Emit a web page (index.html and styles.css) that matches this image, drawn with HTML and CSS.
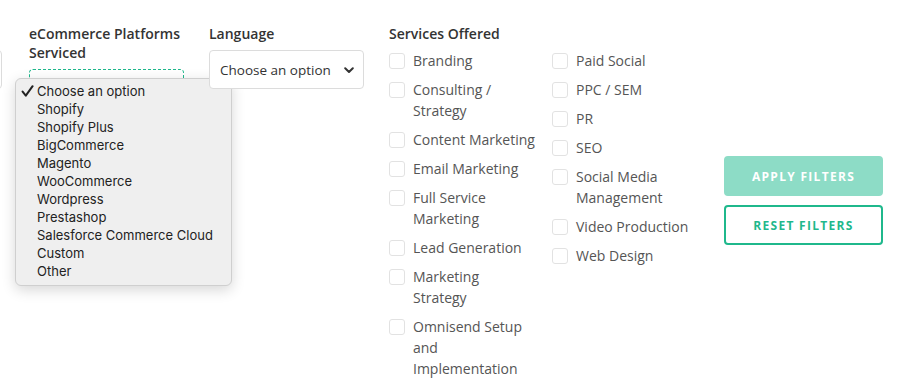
FILE: index.html
```html
<!DOCTYPE html>
<html lang="en">
<head>
<meta charset="utf-8">
<title>Filters</title>
<link rel="stylesheet" href="styles.css">
</head>
<body>
<div class="filters">
  <div class="field field-prev">
    <div class="label-spacer"></div>
    <div class="select"></div>
  </div>

  <div class="field field-platforms">
    <div class="label">eCommerce Platforms Serviced</div>
    <div class="select select-focus"></div>
    <ul class="menu">
      <li class="menu-item checked"><svg class="tick" width="13" height="12" viewBox="0 0 13 12"><path d="M1.6 6.6 L4.8 10.6 L11.6 1.2" fill="none" stroke="#222" stroke-width="2" stroke-linecap="round" stroke-linejoin="round"/></svg>Choose an option</li>
      <li class="menu-item">Shopify</li>
      <li class="menu-item">Shopify Plus</li>
      <li class="menu-item">BigCommerce</li>
      <li class="menu-item">Magento</li>
      <li class="menu-item">WooCommerce</li>
      <li class="menu-item">Wordpress</li>
      <li class="menu-item">Prestashop</li>
      <li class="menu-item">Salesforce Commerce Cloud</li>
      <li class="menu-item">Custom</li>
      <li class="menu-item">Other</li>
    </ul>
  </div>

  <div class="field">
    <div class="label">Language</div>
    <div class="select">
      <span>Choose an option</span>
      <svg class="chevron" width="10" height="7" viewBox="0 0 10 7"><path d="M1.2 1.3 L5 5 L8.8 1.3" fill="none" stroke="#333" stroke-width="2" stroke-linecap="round" stroke-linejoin="round"/></svg>
    </div>
  </div>

  <div class="services">
    <div class="label">Services Offered</div>
    <div class="service-cols">
      <ul class="checks">
        <li class="check"><span class="box"></span><span class="text">Branding</span></li>
        <li class="check"><span class="box"></span><span class="text">Consulting / Strategy</span></li>
        <li class="check"><span class="box"></span><span class="text">Content Marketing</span></li>
        <li class="check"><span class="box"></span><span class="text">Email Marketing</span></li>
        <li class="check"><span class="box"></span><span class="text">Full Service Marketing</span></li>
        <li class="check"><span class="box"></span><span class="text">Lead Generation</span></li>
        <li class="check"><span class="box"></span><span class="text">Marketing Strategy</span></li>
        <li class="check"><span class="box"></span><span class="text">Omnisend Setup and Implementation</span></li>
      </ul>
      <ul class="checks checks-2">
        <li class="check"><span class="box"></span><span class="text">Paid Social</span></li>
        <li class="check"><span class="box"></span><span class="text">PPC / SEM</span></li>
        <li class="check"><span class="box"></span><span class="text">PR</span></li>
        <li class="check"><span class="box"></span><span class="text">SEO</span></li>
        <li class="check"><span class="box"></span><span class="text">Social Media Management</span></li>
        <li class="check"><span class="box"></span><span class="text">Video Production</span></li>
        <li class="check"><span class="box"></span><span class="text">Web Design</span></li>
      </ul>
    </div>
  </div>

  <div class="actions">
    <button class="btn btn-apply">Apply Filters</button>
    <button class="btn btn-reset">Reset Filters</button>
  </div>
</div>
</body>
</html>
```

FILE: styles.css
```css
* { box-sizing: border-box; }

html, body {
  margin: 0;
  padding: 0;
  background: #fff;
  overflow: hidden;
}

body {
  font-family: "Open Sans", "Liberation Sans", sans-serif;
  color: #333;
  width: 908px;
  height: 386px;
}

ul { list-style: none; margin: 0; padding: 0; }

.filters {
  display: flex;
  align-items: flex-start;
  gap: 25px;
  padding: 24px 0 0 29px;
  min-height: 386px;
}

.field {
  width: 155px;
  flex: none;
  position: relative;
}

.field-prev {
  margin-left: -182px;
  margin-right: 2px;
}

.field-platforms {
  width: 155px;
}

.label {
  font-size: 14px;
  font-weight: 600;
  line-height: 19px;
  color: #333;
  margin-bottom: 7px;
}

.label-spacer {
  height: 19px;
  margin-bottom: 7px;
}

.select {
  height: 39px;
  border: 1px solid #dcdcdc;
  border-radius: 4px;
  display: flex;
  align-items: center;
  justify-content: space-between;
  padding: 0 9px 0 10px;
  font-size: 13.5px;
  color: #333;
  background: #fff;
}

.select-focus {
  border: 1px dashed #1fb88c;
}

.chevron { display: block; margin-top: 1px; }

.menu {
  position: absolute;
  left: -14px;
  top: 54px;
  width: 217px;
  padding: 3px 0 5px;
  background: #efefef;
  border: 1px solid #cfcfcf;
  border-radius: 6px;
  box-shadow: 0 4px 14px rgba(0, 0, 0, 0.16);
  font-family: Inter, "Liberation Sans", sans-serif;
  font-size: 13px;
  color: #222;
}

.menu-item {
  height: 18px;
  line-height: 18px;
  padding-left: 21px;
  white-space: nowrap;
  position: relative;
}

.tick {
  position: absolute;
  left: 5px;
  top: 3px;
  display: block;
}

.services {
  width: 310px;
  flex: none;
}

.service-cols {
  display: flex;
  gap: 16px;
}

.checks {
  width: 147px;
  display: flex;
  flex-direction: column;
  gap: 8px;
}

.checks-2 { width: 147px; }

.check {
  display: flex;
  align-items: flex-start;
  gap: 8px;
  font-size: 14px;
  line-height: 21px;
  color: #555;
}

.box {
  flex: none;
  width: 16px;
  height: 16px;
  margin-top: 3px;
  border: 1px solid #e2e2e2;
  border-radius: 3px;
  background: #fff;
}

.actions {
  align-self: center;
  width: 159px;
  display: flex;
  flex-direction: column;
  gap: 9px;
  margin-top: -9px;
}

.btn {
  height: 40px;
  width: 100%;
  border-radius: 4px;
  font-family: "Open Sans", "Liberation Sans", sans-serif;
  font-size: 12px;
  font-weight: 700;
  letter-spacing: 1.3px;
  text-transform: uppercase;
  cursor: pointer;
}

.btn-apply {
  background: #8ddcc6;
  border: 2px solid #8ddcc6;
  color: #fff;
}

.btn-reset {
  background: #fff;
  border: 2px solid #1fb88c;
  color: #1fb88c;
}
```
